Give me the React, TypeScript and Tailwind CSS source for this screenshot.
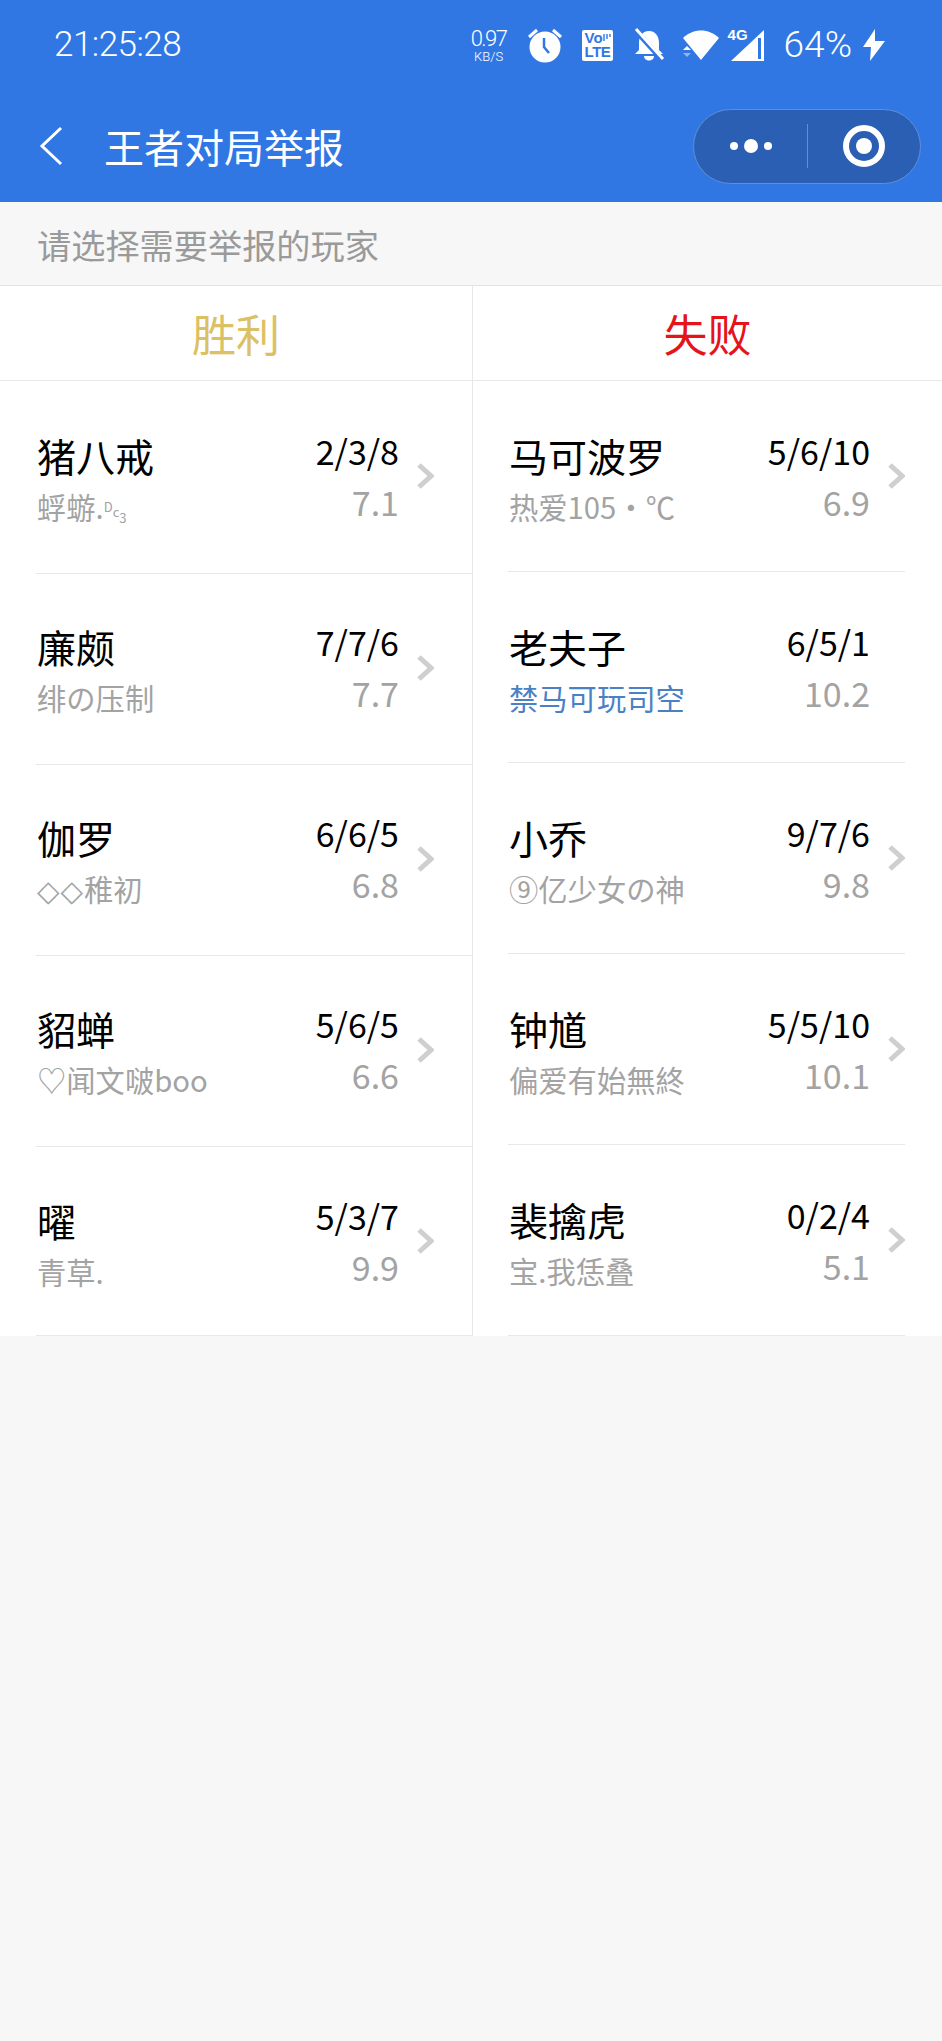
import type { ReactNode } from "react";

type Player = {
  hero: string;
  nick: ReactNode;
  kda: string;
  score: string;
  blue?: boolean;
};

const WINNERS: Player[] = [
  {
    hero: "猪八戒",
    nick: (
      <>
        蜉蝣.
        <span className="text-[13px]">
          <span className="align-[7px]">D</span>
          <span className="align-[2px]">c</span>
          <span className="align-[-4px]">3</span>
        </span>
      </>
    ),
    kda: "2/3/8",
    score: "7.1",
  },
  { hero: "廉颇", nick: "绯の压制", kda: "7/7/6", score: "7.7" },
  {
    hero: "伽罗",
    nick: (
      <>
        <span className="font-['DejaVu_Sans',sans-serif] tracking-[1px]">◇◇</span>稚初
      </>
    ),
    kda: "6/6/5",
    score: "6.8",
  },
  { hero: "貂蝉", nick: "♡闻文啵boo", kda: "5/6/5", score: "6.6" },
  { hero: "曜", nick: "青草.", kda: "5/3/7", score: "9.9" },
];

const LOSERS: Player[] = [
  { hero: "马可波罗", nick: "热爱105・℃", kda: "5/6/10", score: "6.9" },
  { hero: "老夫子", nick: "禁马可玩司空", kda: "6/5/1", score: "10.2", blue: true },
  { hero: "小乔", nick: "⑨亿少女の神", kda: "9/7/6", score: "9.8" },
  { hero: "钟馗", nick: "偏爱有始無終", kda: "5/5/10", score: "10.1" },
  { hero: "裴擒虎", nick: "宝.我恁叠", kda: "0/2/4", score: "5.1" },
];

// left column dividers sit 2px lower than the right ones, the text doesn't
const LEFT_ROWS = [
  "h-[193px] pb-[2px]",
  "h-[191px] pb-[3px]",
  "h-[191px] pb-[3px]",
  "h-[191px] pb-[3px]",
  "h-[189px]",
];

function StatusBar() {
  return (
    <div className="flex h-[90px] items-center pl-[54px] pr-[56px] text-white">
      <span className="font-['Roboto',sans-serif] text-[35px] font-light tracking-[-0.5px]">21:25:28</span>
      <div className="ml-auto flex items-center">
        <div className="flex w-[40px] flex-col items-center font-['Roboto',sans-serif] font-light leading-none">
          <span className="text-[22px] tracking-[-1.5px]">0.97</span>
          <span className="text-[13px]">KB/S</span>
        </div>
        <svg className="ml-[18px]" width="36" height="36" viewBox="0 0 36 36">
          <circle cx="18" cy="20" r="15.5" fill="#fff" />
          <path d="M2 10 L10 3 M34 10 L26 3" stroke="#fff" strokeWidth="3" />
          <path d="M17 11 V20 L22 26" stroke="#3077e4" strokeWidth="2.5" fill="none" />
        </svg>
        <div className="relative ml-[19px] flex h-[31px] w-[31px] flex-col rounded-[2px] bg-white pl-[3px] pt-[1px] font-['Liberation_Sans',sans-serif] text-[15px] font-bold leading-[14px] text-[#3077e4]">
          <span>Vo</span>
          <span className="tracking-[-0.5px]">LTE</span>
          <svg className="absolute right-[2px] top-[3px]" width="8" height="9" viewBox="0 0 8 9" fill="none">
            <path d="M1 1 V8 M4 1 V6 M7 1 V4" stroke="#3077e4" strokeWidth="1.4" />
          </svg>
        </div>
        <svg className="ml-[20px]" width="32" height="34" viewBox="0 0 32 34">
          <path d="M16 3 C9 3 6 9 6 15 V22 L2 26 H30 L26 22 V15 C26 9 23 3 16 3Z" fill="#fff" />
          <path d="M11 28 H21 C21 34 11 34 11 28Z" fill="#fff" />
          <path d="M3 3 L30 33" stroke="#3077e4" strokeWidth="5" />
          <path d="M3 1 L30 31" stroke="#fff" strokeWidth="3" />
        </svg>
        <svg className="ml-[17px]" width="38" height="32" viewBox="0 0 38 32">
          <path d="M1 9 C11 -1 27 -1 37 9 L19 31Z" fill="#fff" />
          <path d="M1 21 L5 17 L9 21Z" fill="#fff" />
          <path d="M1 24 L5 28 L9 24Z" fill="#8fb6f0" />
        </svg>
        <div className="relative ml-[10px] h-[34px] w-[35px]">
          <svg className="absolute inset-0" width="35" height="34" viewBox="0 0 35 34">
            <path d="M1 33 L34 2 V33Z" fill="#fff" />
            <rect x="28" y="10" width="3" height="21" fill="#3077e4" />
          </svg>
          <span className="absolute left-[-2px] top-[-4px] font-['Liberation_Sans',sans-serif] text-[15px] font-bold text-white">4G</span>
        </div>
        <span className="ml-[19px] font-['Roboto',sans-serif] text-[37px] font-light">64%</span>
        <svg className="ml-[10px]" width="24" height="34" viewBox="0 0 24 34">
          <path d="M13 1 L1 19 H9 L8 33 L23 13 H13Z" fill="#fff" />
        </svg>
      </div>
    </div>
  );
}

function NavBar() {
  return (
    <div className="flex h-[112px] items-center pl-[39px] pr-[21px] text-white">
      <svg width="24" height="40" viewBox="0 0 24 40" fill="none">
        <path d="M22 2 L3 20 L22 38" stroke="#fff" strokeWidth="3" />
      </svg>
      <span className="ml-[41px] text-[40px] leading-none">王者对局举报</span>
      <div className="ml-auto flex h-[75px] w-[228px] items-center rounded-full border border-[#5d8fdc] bg-[#2a5fb4]">
        <div className="flex w-[113px] items-center justify-center gap-[6px]">
          <span className="h-[8px] w-[8px] rounded-full bg-white" />
          <span className="h-[14px] w-[14px] rounded-full bg-white" />
          <span className="h-[8px] w-[8px] rounded-full bg-white" />
        </div>
        <div className="h-[44px] w-px bg-[#5d8fdc]" />
        <div className="flex flex-1 items-center justify-center">
          <div className="flex h-[42px] w-[42px] items-center justify-center rounded-full border-[6px] border-white">
            <span className="h-[16px] w-[16px] rounded-full bg-white" />
          </div>
        </div>
      </div>
    </div>
  );
}

function PlayerRow({ player, className }: { player: Player; className: string }) {
  return (
    <div className={`flex items-center border-b border-[#e8e8e8] ${className}`}>
      <div className="min-w-0 flex-1 pl-[1px] pt-[3px]">
        <div className="mt-[2px] text-[39px] leading-[46px] text-black">{player.hero}</div>
        <div className={`mt-[8px] h-[40px] text-[29.3px] leading-[40px] ${player.blue ? "text-[#4a80c4]" : "text-[#a3a3a3]"}`}>
          {player.nick}
        </div>
      </div>
      <div className="text-right">
        <div className="text-[34px] leading-[46px] text-black">{player.kda}</div>
        <div className="mt-[5px] text-[34px] leading-[46px] text-[#a3a3a3]">{player.score}</div>
      </div>
      <div className="flex w-[35px] justify-end">
        {/* this row has no arrow in the list */}
        {player.kda !== "6/5/1" && (
          <svg width="17" height="26" viewBox="0 0 17 26" fill="none">
            <path d="M2 2 L14 13 L2 24" stroke="#cfcfcf" strokeWidth="5" />
          </svg>
        )}
      </div>
    </div>
  );
}

export default function App() {
  return (
    <div className="flex min-h-[2041px] w-[942px] flex-col bg-[#f7f7f7] font-['Noto_Sans_CJK_SC',sans-serif]">
      <div className="bg-[#3077e4]">
        <StatusBar />
        <NavBar />
      </div>

      <div className="flex h-[84px] items-center border-b border-[#e3e3e3] pl-[37px] pt-[2px] text-[34.2px] text-[#9a9a9a]">
        请选择需要举报的玩家
      </div>

      <div className="flex bg-white">
        <div className="w-[473px] border-r border-[#e8e8e8]">
          <div className="flex h-[95px] items-center justify-center border-b border-[#e8e8e8] text-[44px] text-[#dcc064]">
            胜利
          </div>
          <div className="pl-[36px]">
            {WINNERS.map((p, i) => (
              <PlayerRow key={p.hero} player={p} className={`pr-[38px] ${LEFT_ROWS[i]}`} />
            ))}
          </div>
        </div>
        <div className="flex-1">
          <div className="flex h-[95px] items-center justify-center border-b border-[#e8e8e8] text-[44px] text-[#e5131a]">
            失败
          </div>
          <div className="pl-[35px] pr-[37px]">
            {LOSERS.map((p) => (
              <PlayerRow key={p.hero} player={p} className="h-[191px]" />
            ))}
          </div>
        </div>
      </div>
    </div>
  );
}
